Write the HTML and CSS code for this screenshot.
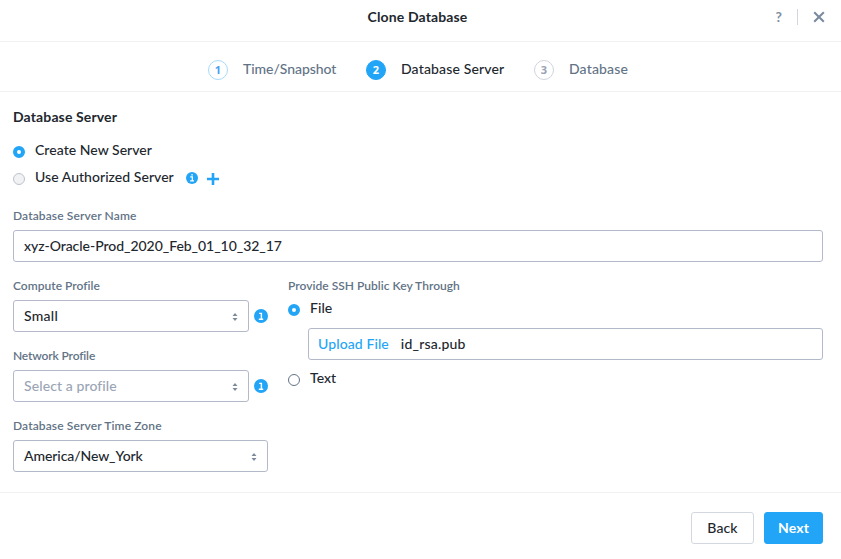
FILE: index.html
```html
<!DOCTYPE html>
<html lang="en">
<head>
<meta charset="utf-8">
<title>Clone Database</title>
<link rel="stylesheet" href="styles.css">
</head>
<body>
<div class="modal">
  <header class="header">
    <span class="header-side"></span>
    <h1 class="header-title"><span>Clone Database</span></h1>
    <div class="header-side header-actions">
      <span class="help">?</span>
      <span class="divider"></span>
      <svg class="close" viewBox="0 0 12 12"><path d="M1.2 1.2 10.8 10.8M10.8 1.2 1.2 10.8"/></svg>
    </div>
  </header>

  <nav class="steps">
    <div class="step done"><span class="step-num">1</span><span class="step-label s1">Time/Snapshot</span></div>
    <div class="step active"><span class="step-num">2</span><span class="step-label s2">Database Server</span></div>
    <div class="step"><span class="step-num">3</span><span class="step-label s3">Database</span></div>
  </nav>

  <main class="content">
    <h2 class="section-title"><span>Database Server</span></h2>
    <div class="option"><span class="radio checked"></span><span class="option-label create">Create New Server</span></div>
    <div class="option second"><span class="radio disabled"></span><span class="option-label use">Use Authorized Server</span>
      <svg class="info small" viewBox="0 0 14 14"><circle cx="7" cy="7" r="7"/><path d="M5 5.6H7.4V10.4M4.8 10.4H9.4M6.2 3.4H8"/></svg>
      <svg class="plus" viewBox="0 0 12 12"><path d="M6 0V12M0 6H12"/></svg>
    </div>

    <div class="label name-label"><span class="l1">Database Server Name</span></div>
    <div class="field"><span class="name-value">xyz-Oracle-Prod_2020_Feb_01_10_32_17</span></div>

    <div class="columns">
      <div class="left">
        <div class="label"><span class="l2">Compute Profile</span></div>
        <div class="row">
          <div class="field select"><span class="v1">Small</span><svg class="carets" viewBox="0 0 6 8"><path d="M3 0 5.5 3H.5ZM3 8 .5 5H5.5Z"/></svg></div>
          <svg class="info" viewBox="0 0 14 14"><circle cx="7" cy="7" r="7"/><path d="M5.2 4.4H7.4V10M4.8 10.2H9.2"/></svg>
        </div>
        <div class="label"><span class="l3">Network Profile</span></div>
        <div class="row">
          <div class="field select placeholder"><span class="v2">Select a profile</span><svg class="carets" viewBox="0 0 6 8"><path d="M3 0 5.5 3H.5ZM3 8 .5 5H5.5Z"/></svg></div>
          <svg class="info" viewBox="0 0 14 14"><circle cx="7" cy="7" r="7"/><path d="M5.2 4.4H7.4V10M4.8 10.2H9.2"/></svg>
        </div>
        <div class="label"><span class="l4">Database Server Time Zone</span></div>
        <div class="field select"><span class="v3">America/New_York</span><svg class="carets" viewBox="0 0 6 8"><path d="M3 0 5.5 3H.5ZM3 8 .5 5H5.5Z"/></svg></div>
      </div>
      <div class="right">
        <div class="label"><span class="l5">Provide SSH Public Key Through</span></div>
        <div class="option file"><span class="radio checked"></span><span class="option-label f1">File</span></div>
        <div class="field upload"><span class="link">Upload File</span><span class="filename">id_rsa.pub</span></div>
        <div class="option text"><span class="radio"></span><span class="option-label f2">Text</span></div>
      </div>
    </div>
  </main>

  <footer class="footer">
    <button class="btn back"><span>Back</span></button>
    <button class="btn primary"><span>Next</span></button>
  </footer>
</div>
</body>
</html>
```
FILE: styles.css
```css
* { box-sizing: border-box; }
body {
  margin: 0;
  background: #fff;
  color: #22272e;
  font: 500 14px/20px Lato, "Liberation Sans", sans-serif;
}
h1, h2 { margin: 0; font-size: 14px; line-height: 20px; font-weight: 700; letter-spacing: 0.13px; }
.modal { width: 841px; height: 559px; display: flex; flex-direction: column; overflow: hidden; }
.modal span { white-space: nowrap; }

.header { height: 42px; padding: 0 16px 8px 11px; display: flex; align-items: center; border-bottom: 1px solid #f0f1f2; }
.header-side { flex: 1; }
.header-title { margin-left: -1px; }
.header-actions { display: flex; justify-content: flex-end; align-items: center; }
.help { color: #7f91a4; font-weight: 700; font-size: 14px; margin-right: 15px; }
.divider { width: 1px; height: 16px; background: #d3d7dd; margin: 1px 15px 0 0; }
.close { width: 12px; height: 12px; margin-top: 1px; }
.close path { stroke: #7b8b9f; stroke-width: 2.1; fill: none; }

.steps { height: 50px; padding: 0 0 5px 208px; display: flex; align-items: flex-end; border-bottom: 1px solid #f0f1f2; }
.step { display: flex; align-items: center; height: 32px; width: 158px; color: #627386; }
.step.active { width: 168px; color: #22272e; }
.step-label { margin-top: -2px; }
.s1 { letter-spacing: -0.05px; }
.s2, .s3 { letter-spacing: 0.15px; }
.step-num { width: 20px; height: 20px; margin-right: 15px; border: 1px solid #d0d4de; border-radius: 50%; font: 700 11px/18px "Open Sans", sans-serif; text-align: center; color: #97a2b4; }
.done .step-num { border-color: #a8dafc; color: #4a9ff5; }
.active .step-num { background: #22a5f7; border-color: #22a5f7; color: #fff; }

.content { padding: 15px 18px 0 13px; height: 400px; }
.section-title { margin-bottom: 13px; }
.option { display: flex; align-items: center; height: 20px; }
.option.second { margin-top: 7px; }
.option-label { letter-spacing: 0.04px; }
.radio { width: 12px; height: 12px; border: 1px solid #627386; border-radius: 50%; margin: 3px 10px 0 0; }
.radio.checked { border: 4px solid #22a5f7; }
.radio.disabled { background: #f1f2f4; border-color: #bcc2cc; }
.info { width: 14px; height: 14px; flex: none; }
.info circle { fill: #22a5f7; }
.info path { fill: none; stroke: #fff; stroke-width: 1.4; }
.info.small { width: 12px; height: 12px; margin: 2px 9px 0 12px; }
.plus { width: 12px; height: 12px; margin-top: 3px; }
.plus path { stroke: #22a5f7; stroke-width: 2.6; }

.label { font-size: 12px; line-height: 18px; font-weight: 600; color: #627386; }
.l1, .l4 { letter-spacing: 0.12px; }
.l2, .l3, .l5 { letter-spacing: 0.02px; }
.l3 { letter-spacing: -0.15px; }
.name-label { margin-top: 20px; height: 23px; }
.name-value { letter-spacing: -0.04px; }
.field { height: 32px; border: 1px solid #b4b9ca; border-radius: 3px; padding: 0 10px; display: flex; align-items: center; background: #fff; }
.columns { display: flex; margin-top: 15px; gap: 20px; height: 200px; }
.left { width: 255px; }
.right { flex: 1; }
.left .label { height: 23px; }
.right .label { height: 21px; }
.row { display: flex; align-items: center; justify-content: space-between; margin-bottom: 15px; }
.row .field { width: 236px; }
.select { justify-content: space-between; }
.v1 { letter-spacing: 0.25px; }
.v2 { letter-spacing: 0.1px; }
.v3 { letter-spacing: -0.08px; }
.carets { width: 6px; height: 8px; margin-top: 2px; fill: #7c8a9b; }
.placeholder { color: #9aa5b5; }
.upload { margin: 10px 0 8px 20px; padding-left: 9px; }
.link { color: #22a5f7; margin-right: 12px; letter-spacing: 0.1px; }
.filename { letter-spacing: 0.2px; }

.footer { height: 67px; border-top: 1px solid #f0f1f2; padding: 19px 18px 0 0; display: flex; justify-content: flex-end; gap: 10px; }
.btn { height: 32px; width: 63px; padding: 0; border: 1px solid #d3d8e0; border-radius: 3px; background: #fff; color: #22272e; font: 500 14px/20px Lato, sans-serif; letter-spacing: 0.15px; }
.btn.primary { width: 59px; background: #22a5f7; border-color: #22a5f7; color: #fff; font-weight: 700; }
```
